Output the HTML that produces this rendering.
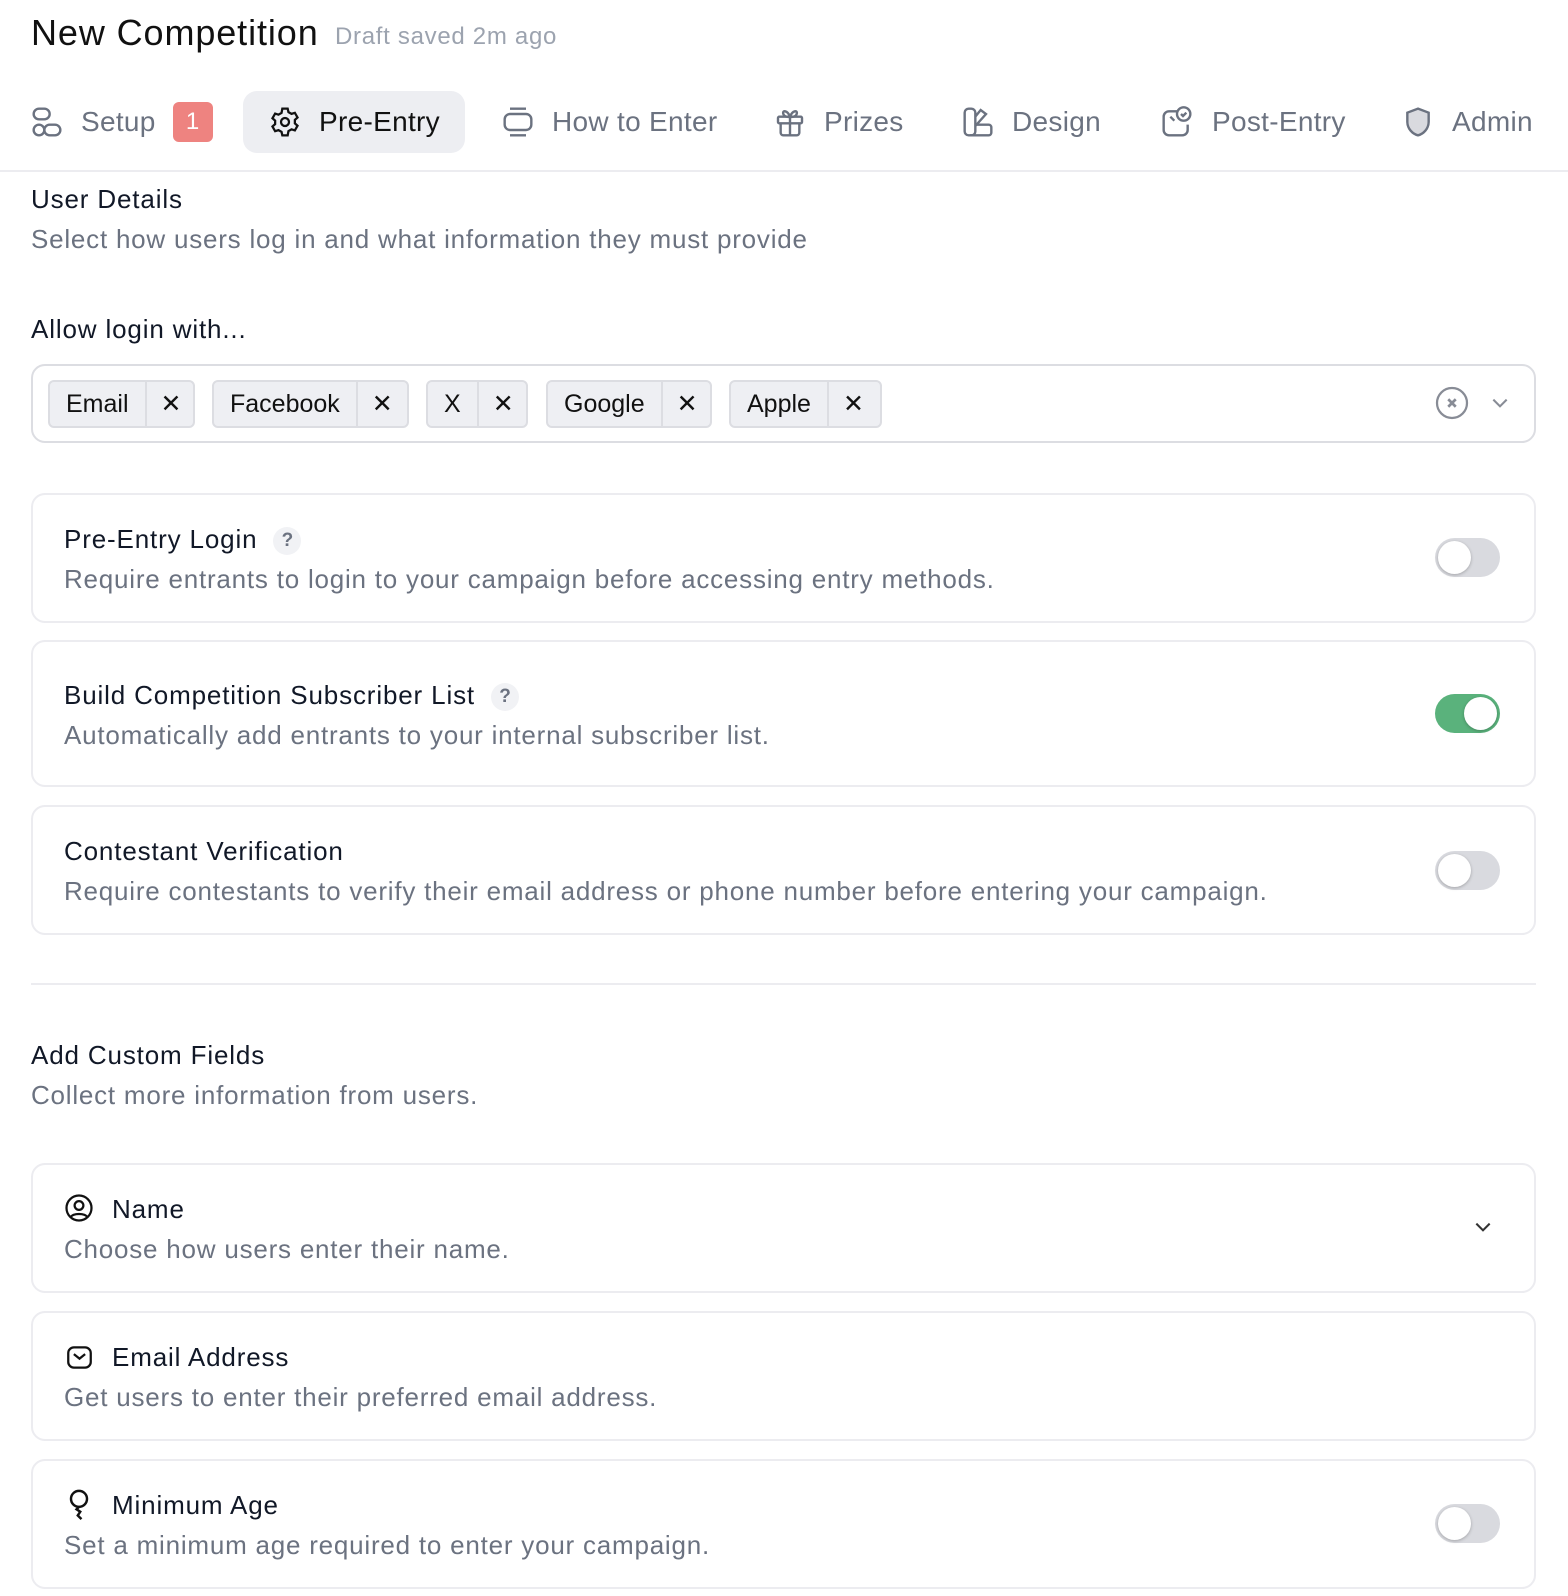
<!DOCTYPE html>
<html><head><meta charset="utf-8"><style>
*{margin:0;padding:0;box-sizing:border-box}
body{width:1568px;height:1596px;background:#fff;font-family:"Liberation Sans",sans-serif;color:#111827;position:relative;overflow:hidden}
.a{position:absolute;white-space:nowrap}
.t{font-size:26px;letter-spacing:0.85px;color:#111827}
.d{font-size:26px;letter-spacing:0.78px;color:#6b7280}
.tab{position:absolute;top:91px;height:62px;display:flex;align-items:center;font-size:28px;color:#6b7280;letter-spacing:0.3px}
.tab svg{margin-right:18px}
.card{position:absolute;left:31px;width:1505px;border:2px solid #ececf0;border-radius:14px}
.tog{position:absolute;left:1435px;width:65px;height:39px;border-radius:20px;background:#d9dadf}
.tog::after{content:"";position:absolute;left:3px;top:3px;width:33px;height:33px;border-radius:50%;background:#fff;box-shadow:0 1px 3px rgba(0,0,0,.25)}
.tog.on{background:#5ab27c}
.tog.on::after{left:29px}
.chip{position:absolute;top:380px;height:48px;border:2px solid #dcdde2;background:#eeeff3;border-radius:6px;display:flex;font-size:25px;color:#111}
.chip span{display:flex;align-items:center;padding:0 16px}
.chip span+span{border-left:2px solid #dcdde2;padding:0 14px}
.q{display:inline-block;width:28px;height:28px;border-radius:50%;background:#f1f2f5;color:#6b7280;font-size:19px;font-weight:bold;text-align:center;line-height:28px;margin-left:16px;vertical-align:2px;letter-spacing:0}
</style></head><body>
<div class="a" style="left:31px;top:12px;font-size:36px;color:#111;letter-spacing:0.9px">New Competition</div>
<div class="a" style="left:335px;top:23px;font-size:24px;color:#9ca3af;letter-spacing:0.7px">Draft saved 2m ago</div>

<div class="tab" style="left:31px"><svg width="32" height="32" viewBox="0 0 24 24" fill="none" stroke="#6b7280" stroke-width="1.8"><rect x="2" y="2" width="12" height="8" rx="4"/><circle cx="6" cy="18" r="4"/><rect x="10" y="14" width="12" height="8" rx="4"/></svg>Setup<span style="margin-left:17px;background:#ee8380;color:#fff;border-radius:6px;width:40px;height:40px;display:inline-flex;align-items:center;justify-content:center;font-size:24px">1</span></div>
<div class="tab" style="left:243px;width:222px;background:#edeef2;border-radius:14px;padding-left:26px;color:#111"><svg width="32" height="32" viewBox="0 0 24 24" fill="none" stroke="#111" stroke-width="1.7"><path d="M10 2h4l.6 2.6 2.3 1.3 2.5-.8 2 3.5-2 1.8v2.6l2 1.8-2 3.5-2.5-.8-2.3 1.3L14 22h-4l-.6-2.6-2.3-1.3-2.5.8-2-3.5 2-1.8v-2.6l-2-1.8 2-3.5 2.5.8 2.3-1.3z"/><circle cx="12" cy="12" r="3"/></svg>Pre-Entry</div>
<div class="tab" style="left:502px"><svg width="32" height="32" viewBox="0 0 24 24" fill="none" stroke="#6b7280" stroke-width="1.8"><rect x="2" y="6" width="20" height="12" rx="4"/><path d="M6 2h12M6 22h12"/></svg>How to Enter</div>
<div class="tab" style="left:774px"><svg width="32" height="32" viewBox="0 0 24 24" fill="none" stroke="#6b7280" stroke-width="1.8"><rect x="3" y="8" width="18" height="5" rx="1"/><path d="M5 13v7a2 2 0 002 2h10a2 2 0 002-2v-7M12 8v14M12 8C10 3 6 3 7 6s5 2 5 2c0 0 4 1 5-2s-3-3-5 2"/></svg>Prizes</div>
<div class="tab" style="left:962px"><svg width="32" height="32" viewBox="0 0 24 24" fill="none" stroke="#6b7280" stroke-width="1.8"><rect x="2" y="2" width="8" height="20" rx="3"/><path d="M10 8l4-5 4 3-8 9M10 14h10a2 2 0 012 2v4a2 2 0 01-2 2H6"/></svg>Design</div>
<div class="tab" style="left:1160px"><svg width="34" height="32" viewBox="0 0 24 24" fill="none" stroke="#6b7280" stroke-width="1.8"><path d="M12 4H6a4 4 0 00-4 4v10a4 4 0 004 4h10a4 4 0 004-4v-4M7 8l3 3"/><circle cx="17" cy="6" r="5"/><path d="M15 6l1.5 1.5L19 5"/></svg>Post-Entry</div>
<div class="tab" style="left:1402px"><svg width="32" height="32" viewBox="0 0 24 24" fill="#d9dadf" stroke="#6b7280" stroke-width="1.8"><path d="M12 2l8 3v7c0 5-4 9-8 10-4-1-8-5-8-10V5z"/></svg>Admin</div>
<div class="a" style="left:0;top:170px;width:1568px;height:2px;background:#ececf0"></div>

<div class="a t" style="left:31px;top:184px">User Details</div>
<div class="a d" style="left:31px;top:224px">Select how users log in and what information they must provide</div>
<div class="a t" style="left:31px;top:314px">Allow login with...</div>

<div class="a" style="left:31px;top:364px;width:1505px;height:79px;border:2px solid #dcdde2;border-radius:14px"></div>
<div class="chip" style="left:48px;width:147px"><span>Email</span><span>✕</span></div>
<div class="chip" style="left:212px;width:197px"><span>Facebook</span><span>✕</span></div>
<div class="chip" style="left:426px;width:102px"><span>X</span><span>✕</span></div>
<div class="chip" style="left:546px;width:166px"><span>Google</span><span>✕</span></div>
<div class="chip" style="left:729px;width:153px"><span>Apple</span><span>✕</span></div>
<svg class="a" style="left:1434px;top:385px" width="36" height="36" viewBox="0 0 24 24" fill="none" stroke="#888c96" stroke-width="1.5"><circle cx="12" cy="12" r="10"/><path d="M9.5 9.5l5 5M14.5 9.5l-5 5" stroke-width="1.8"/></svg>
<svg class="a" style="left:1489px;top:393px" width="22" height="20" viewBox="0 0 24 24" fill="none" stroke="#888c96" stroke-width="2.5"><path d="M4 8l8 8 8-8"/></svg>

<div class="card" style="top:493px;height:130px"></div>
<div class="a t" style="left:64px;top:524px">Pre-Entry Login<span class="q">?</span></div>
<div class="a d" style="left:64px;top:564px">Require entrants to login to your campaign before accessing entry methods.</div>
<div class="tog" style="top:538px"></div>

<div class="card" style="top:640px;height:147px"></div>
<div class="a t" style="left:64px;top:680px">Build Competition Subscriber List<span class="q">?</span></div>
<div class="a d" style="left:64px;top:720px">Automatically add entrants to your internal subscriber list.</div>
<div class="tog on" style="top:694px"></div>

<div class="card" style="top:805px;height:130px"></div>
<div class="a t" style="left:64px;top:836px">Contestant Verification</div>
<div class="a d" style="left:64px;top:876px">Require contestants to verify their email address or phone number before entering your campaign.</div>
<div class="tog" style="top:851px"></div>

<div class="a" style="left:31px;top:983px;width:1505px;height:2px;background:#ececf0"></div>
<div class="a t" style="left:31px;top:1040px">Add Custom Fields</div>
<div class="a d" style="left:31px;top:1080px">Collect more information from users.</div>

<div class="card" style="top:1163px;height:130px"></div>
<svg class="a" style="left:64px;top:1193px" width="30" height="30" viewBox="0 0 24 24" fill="none" stroke="#111" stroke-width="1.8"><circle cx="12" cy="12" r="10"/><circle cx="12" cy="10" r="3.5"/><path d="M5.5 19c2-3 11-3 13 0"/></svg>
<div class="a t" style="left:112px;top:1194px">Name</div>
<div class="a d" style="left:64px;top:1234px">Choose how users enter their name.</div>
<svg class="a" style="left:1472px;top:1217px" width="22" height="20" viewBox="0 0 24 24" fill="none" stroke="#333" stroke-width="2.5"><path d="M4 8l8 8 8-8"/></svg>

<div class="card" style="top:1311px;height:130px"></div>
<svg class="a" style="left:66px;top:1344px" width="27" height="27" viewBox="0 0 24 24" fill="none" stroke="#111" stroke-width="2"><rect x="2" y="3" width="20" height="18" rx="5"/><path d="M7 9l5 4 5-4"/></svg>
<div class="a t" style="left:112px;top:1342px">Email Address</div>
<div class="a d" style="left:64px;top:1382px">Get users to enter their preferred email address.</div>

<div class="card" style="top:1459px;height:130px"></div>
<svg class="a" style="left:66px;top:1489px" width="26" height="32" viewBox="0 0 20 26" fill="none" stroke="#111" stroke-width="2"><circle cx="10" cy="8" r="6.5"/><path d="M10 14.5l-2 2 3 2-2 3 3 3"/></svg>
<div class="a t" style="left:112px;top:1490px">Minimum Age</div>
<div class="a d" style="left:64px;top:1530px">Set a minimum age required to enter your campaign.</div>
<div class="tog" style="top:1504px"></div>
</body></html>
